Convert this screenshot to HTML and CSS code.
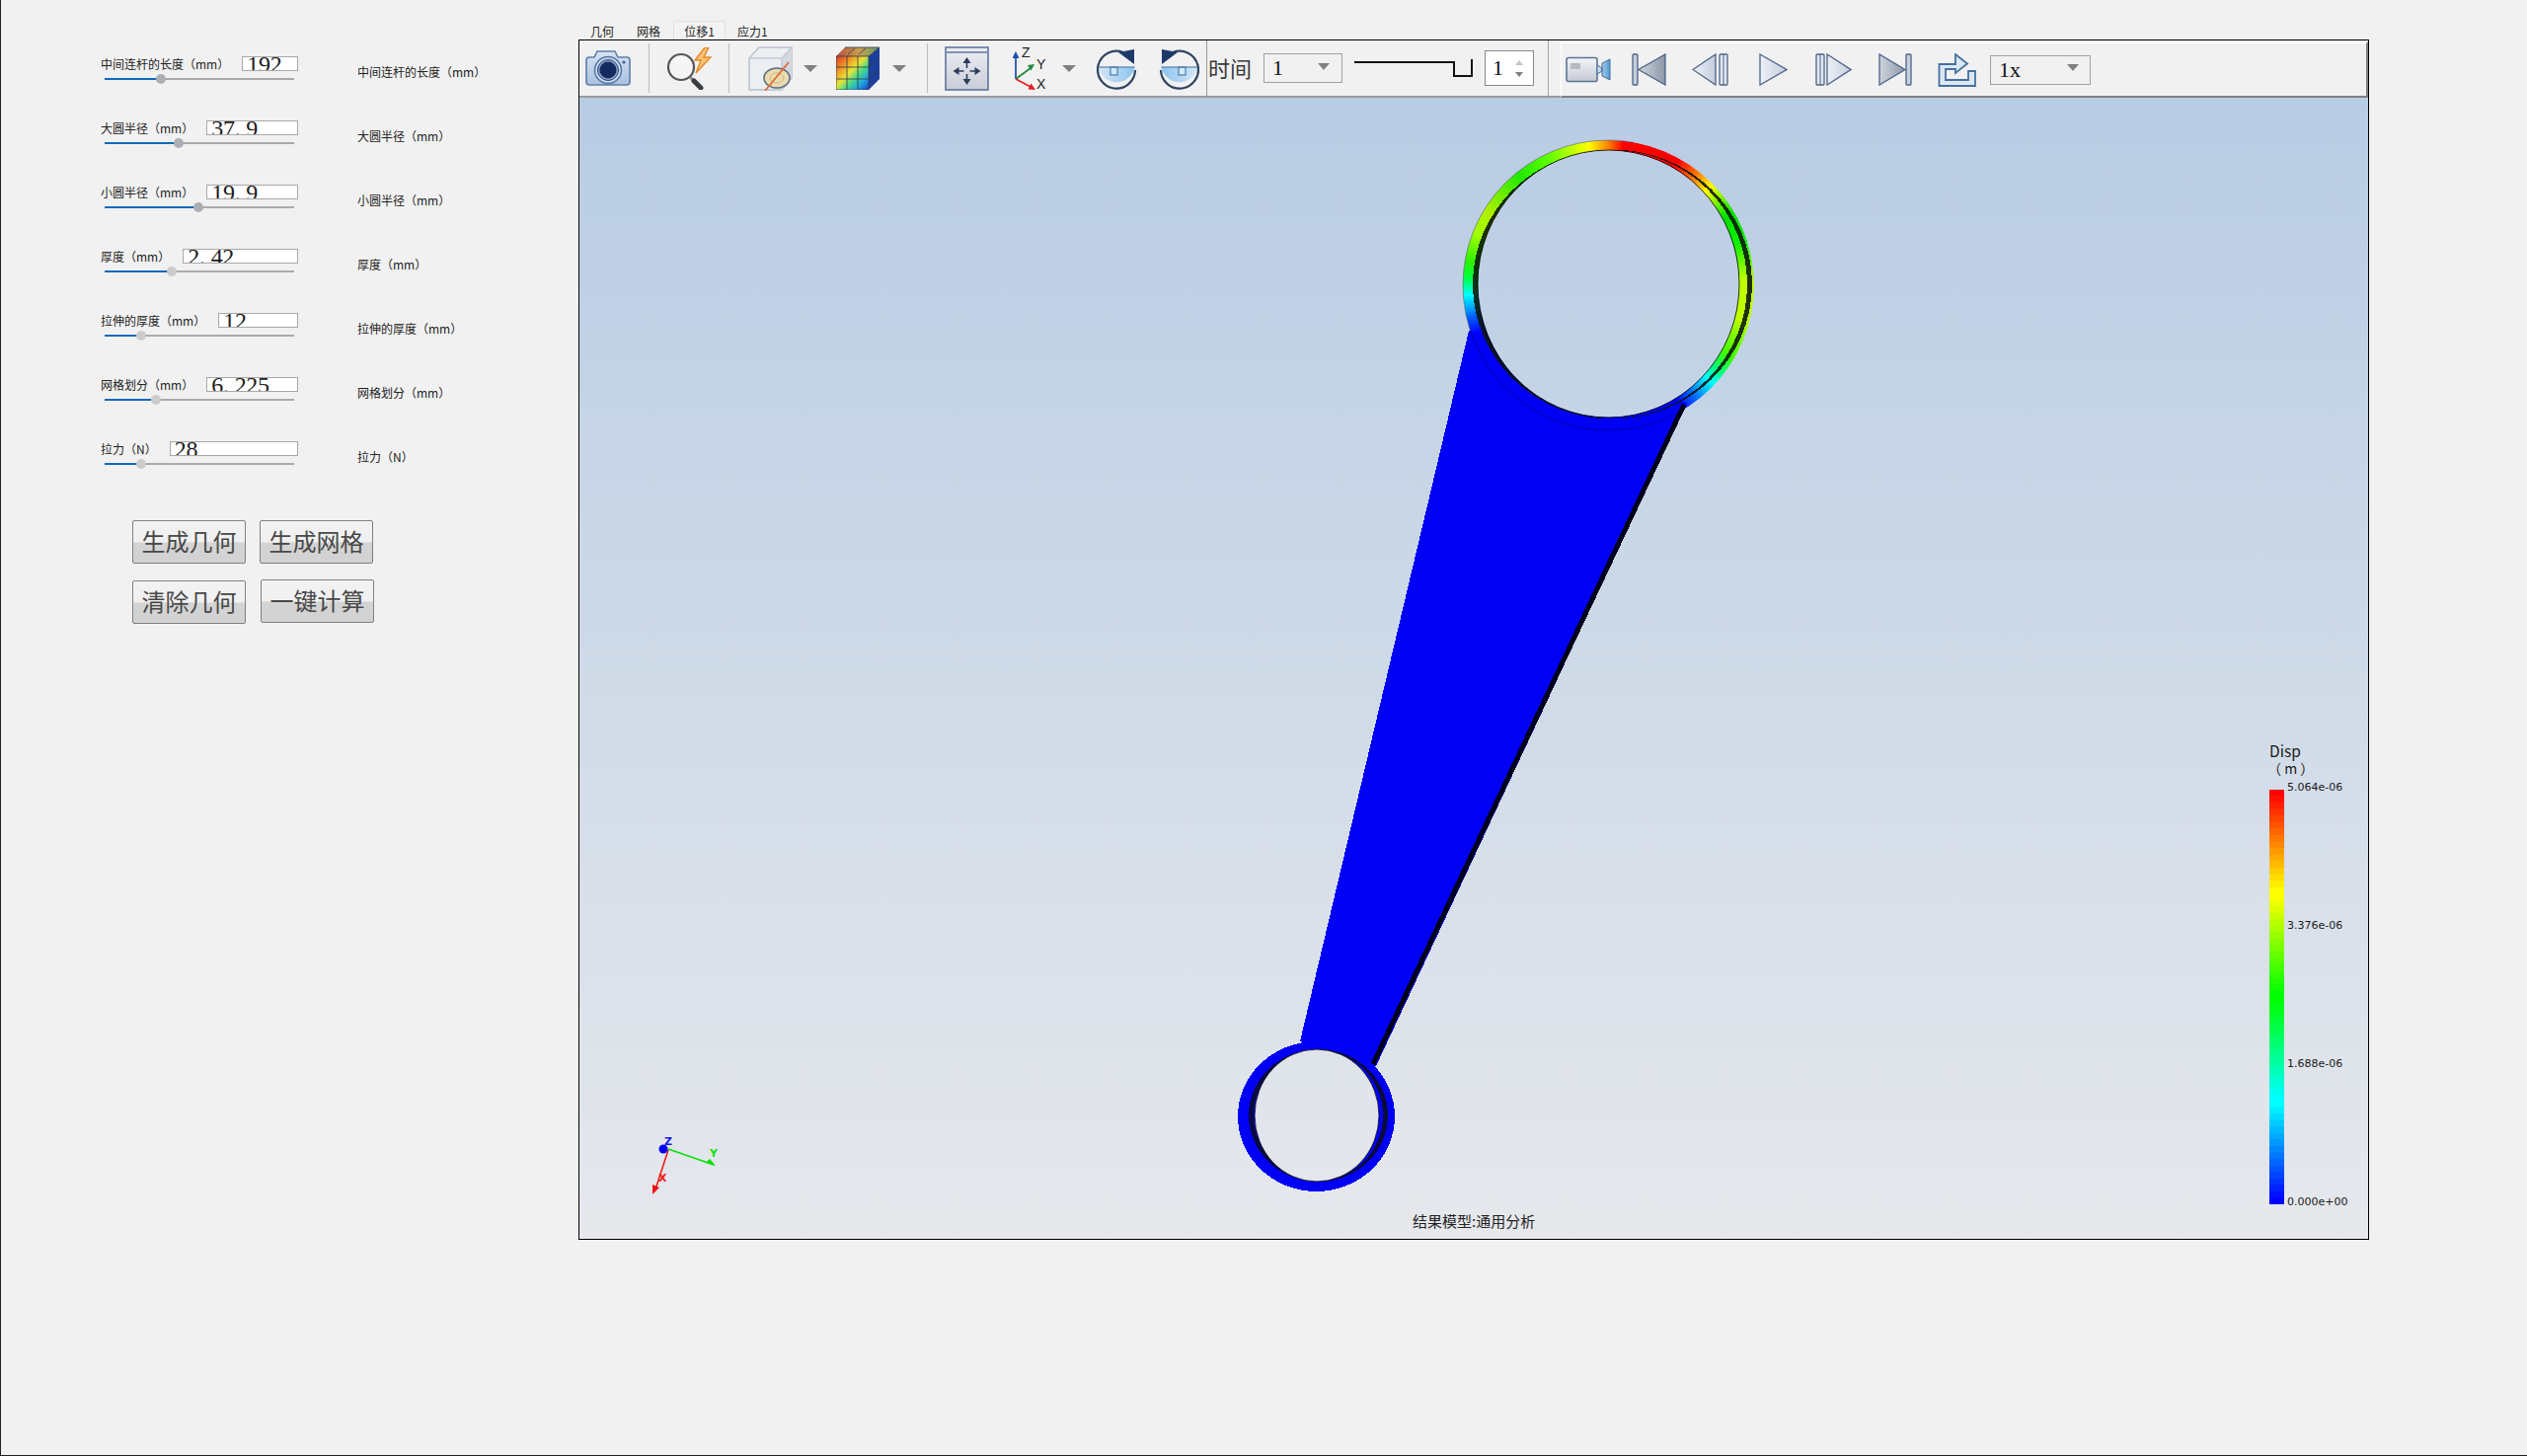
FILE: index.html
```html
<!DOCTYPE html>
<html lang="zh-CN">
<head>
    <meta charset="UTF-8">
    <title>连杆分析</title>
    <link rel="stylesheet" href="styles.css">
</head>
<body>
    <div class="panel">
        <div class="row">
            <div class="ctl">
                <div class="ctl-top"><span class="lbl">中间连杆的长度（mm）</span><div class="num"><span>192</span></div></div>
                <div class="track"><div class="fill" style="width:29.7%"></div></div>
            </div>
            <div class="side">中间连杆的长度（mm）</div>
        </div>
        <div class="row">
            <div class="ctl">
                <div class="ctl-top"><span class="lbl">大圆半径（mm）</span><div class="num"><span>37<b>.</b>9</span></div></div>
                <div class="track"><div class="fill" style="width:39.1%"></div></div>
            </div>
            <div class="side">大圆半径（mm）</div>
        </div>
        <div class="row">
            <div class="ctl">
                <div class="ctl-top"><span class="lbl">小圆半径（mm）</span><div class="num"><span>19<b>.</b>9</span></div></div>
                <div class="track"><div class="fill" style="width:49.5%"></div></div>
            </div>
            <div class="side">小圆半径（mm）</div>
        </div>
        <div class="row">
            <div class="ctl">
                <div class="ctl-top"><span class="lbl">厚度（mm）</span><div class="num"><span>2<b>.</b>42</span></div></div>
                <div class="track light"><div class="fill" style="width:35.4%"></div></div>
            </div>
            <div class="side">厚度（mm）</div>
        </div>
        <div class="row">
            <div class="ctl">
                <div class="ctl-top"><span class="lbl">拉伸的厚度（mm）</span><div class="num"><span>12</span></div></div>
                <div class="track light"><div class="fill" style="width:19.3%"></div></div>
            </div>
            <div class="side">拉伸的厚度（mm）</div>
        </div>
        <div class="row">
            <div class="ctl">
                <div class="ctl-top"><span class="lbl">网格划分（mm）</span><div class="num"><span>6<b>.</b>225</span></div></div>
                <div class="track light"><div class="fill" style="width:27.1%"></div></div>
            </div>
            <div class="side">网格划分（mm）</div>
        </div>
        <div class="row">
            <div class="ctl">
                <div class="ctl-top"><span class="lbl">拉力（N）</span><div class="num"><span>28</span></div></div>
                <div class="track light"><div class="fill" style="width:19.3%"></div></div>
            </div>
            <div class="side">拉力（N）</div>
        </div>

        <div class="btn-row">
            <button class="btn">生成几何</button>
            <button class="btn">生成网格</button>
        </div>
        <div class="btn-row second">
            <button class="btn">清除几何</button>
            <button class="btn up">一键计算</button>
        </div>
    </div>

    <div class="viewer">
        <div class="tabs">
            <span class="tab">几何</span>
            <span class="tab">网格</span>
            <span class="tab active">位移1</span>
            <span class="tab">应力1</span>
        </div>
        <div class="frame">
            <div class="toolbar">
                <!-- camera -->
                <svg class="ico i-cam" width="46" height="38" viewBox="0 0 46 38">
                    <defs>
                        <linearGradient id="camBody" x1="0" y1="0" x2="0" y2="1"><stop offset="0" stop-color="#d8e4f4"/><stop offset="1" stop-color="#a9c0e0"/></linearGradient>
                    </defs>
                    <path d="M1 11q0-3 3-3h5l3-6h18l3 6h9q3 0 3 3v22q0 3-3 3H4q-3 0-3-3z" fill="url(#camBody)" stroke="#5d7da8" stroke-width="1.6"/>
                    <circle cx="23" cy="21" r="13.5" fill="#c9d9ef" stroke="#56759f" stroke-width="1.5"/>
                    <circle cx="23" cy="21" r="10.5" fill="#8aa2c8" stroke="#2b4575"/>
                    <circle cx="23" cy="21" r="8.5" fill="#152a5e"/>
                    <circle cx="39" cy="13" r="1.6" fill="#3d5f90"/>
                </svg>
                <span class="sep s1"></span>
                <!-- search + bolt -->
                <svg class="ico i-mag" width="47" height="43" viewBox="0 0 47 43">
                    <path d="M39 0L29 13h6l-5 13 15-16h-7l5-10z" fill="#f8c070" stroke="#e58a2c" stroke-width="1.4"/>
                    <circle cx="15" cy="20" r="13" fill="#f6f7f8" fill-opacity=".7" stroke="#555" stroke-width="2.200"/>
                    <path d="M24 30l4 4" stroke="#888" stroke-width="3"/>
                    <path d="M28 34l7 7" stroke="#3a3d42" stroke-width="5" stroke-linecap="round"/>
                </svg>
                <span class="sep s2"></span>
                <!-- clipped box -->
                <svg class="ico i-box" width="45" height="45" viewBox="0 0 45 45">
                    <path d="M1 12L11 1h33v31L34 44H1z" fill="#eceef2" stroke="#b9c1cd" stroke-width="1.5"/>
                    <path d="M34 12L44 1v31L34 44z" fill="#d3d8e0"/>
                    <path d="M1 12h33v32M34 12L44 1" fill="none" stroke="#c3cad5" stroke-width="1.5"/>
                    <ellipse cx="29" cy="32" rx="13" ry="10" fill="#eadcae" stroke="#5f6f88" stroke-width="1.6"/>
                    <ellipse cx="29" cy="32" rx="7" ry="5" fill="none" stroke="#c9b880"/>
                    <path d="M17 45L41 16" stroke="#df6a3a" stroke-width="1.8"/>
                </svg>
                <i class="tri t1"></i>
                <!-- colored cube -->
                <svg class="ico i-cube" width="44" height="44" viewBox="0 0 44 44">
                    <defs>
                        <linearGradient id="cubeFront" x1="0" y1="0" x2="1" y2="1">
                            <stop offset="0" stop-color="#dc3424"/>
                            <stop offset=".28" stop-color="#f0a028"/>
                            <stop offset=".45" stop-color="#e8e436"/>
                            <stop offset=".62" stop-color="#48d884"/>
                            <stop offset=".8" stop-color="#20a4e4"/>
                            <stop offset="1" stop-color="#1a3cc0"/>
                        </linearGradient>
                        <linearGradient id="cubeTop" x1="0" y1="0" x2="1" y2="0">
                            <stop offset="0" stop-color="#b85040"/>
                            <stop offset=".55" stop-color="#c8a050"/>
                            <stop offset="1" stop-color="#5c9868"/>
                        </linearGradient>
                    </defs>
                    <path d="M0 10L9 1h35L33 10z" fill="url(#cubeTop)"/>
                    <path d="M33 10L44 1v32L33 44z" fill="#1b3f9c"/>
                    <rect x="0" y="10" width="33" height="34" fill="url(#cubeFront)"/>
                    <path d="M0 10h33v34H0zM11 10v34M22 10v34M0 21h33M0 33h33M33 10L44 1M33 21l11-9M33 33l11-9M12 8l7-6M23 8l7-6M9 1h35" fill="none" stroke="#30384a" stroke-width=".8"/>
                </svg>
                <i class="tri t2"></i>
                <span class="sep s3"></span>
                <!-- fit view -->
                <svg class="ico i-fit" width="45" height="45" viewBox="0 0 45 45">
                    <defs>
                        <linearGradient id="fitBg" x1="0" y1="0" x2="0" y2="1"><stop offset="0" stop-color="#eceef3"/><stop offset="1" stop-color="#c9cdd8"/></linearGradient>
                    </defs>
                    <rect x="1" y="1" width="43" height="43" fill="url(#fitBg)" stroke="#5f769c" stroke-width="1.600"/>
                    <path d="M1 6h43" stroke="#7f93b4" stroke-width="2"/>
                    <path d="M22.500 16v6M22.500 28v6M13.500 25h6M25.500 25h6" stroke="#2b3c5c" stroke-width="1.600"/>
                    <path d="M22.500 11l-4 6h8zM22.500 39l-4-6h8zM8.500 25l6-4v8zM36.500 25l-6-4v8z" fill="#2b3c5c"/>
                </svg>
                <!-- axes -->
                <svg class="ico i-axes" width="36" height="45" viewBox="0 0 36 45">
                    <path d="M3 33V10" stroke="#2358b0" stroke-width="1.8"/><path d="M3 5l-3.500 7h7z" fill="#1f4fa8"/>
                    <path d="M3 33l15-11" stroke="#1e8a3c" stroke-width="1.8"/><path d="M22 18l-7 1 3.500 5.500z" fill="#1e8a3c"/>
                    <path d="M3 33l15 8" stroke="#e02020" stroke-width="1.8"/><path d="M23 44l-7.500-.5 3-6z" fill="#e02020"/>
                    <text class="ax" x="9" y="11">Z</text><text class="ax" x="24" y="23">Y</text><text class="ax" x="24" y="43">X</text>
                </svg>
                <i class="tri t3"></i>
                <!-- rotate -->
                <svg class="ico i-rot1" width="41" height="43" viewBox="0 0 41 43">
                    <defs>
                        <linearGradient id="rotFill" x1="0" y1="0" x2="1" y2="0"><stop offset="0" stop-color="#d4e7f7"/><stop offset="1" stop-color="#8cc4ec"/></linearGradient>
                    </defs>
                    <path d="M1.500 20h37a19 20 0 0 1-37 0z" fill="url(#rotFill)"/>
                    <rect x="14" y="20" width="7" height="8" fill="#cfe8f8" stroke="#3c6c9c"/>
                    <path d="M27 5A19 19 0 1 0 39 23" fill="none" stroke="#2e4462" stroke-width="2.200"/>
                    <path d="M1.500 20h37" stroke="#3a6a9a" stroke-width="1.200"/>
                    <path d="M38 17L38 2L22 5z" fill="#1d3a66"/>
                </svg>
                <svg class="ico i-rot2" width="41" height="43" viewBox="0 0 41 43">
                    <g transform="translate(41 0) scale(-1 1)">
                        <path d="M1.500 20h37a19 20 0 0 1-37 0z" fill="url(#rotFill)"/>
                        <rect x="14" y="20" width="7" height="8" fill="#cfe8f8" stroke="#3c6c9c"/>
                        <path d="M27 5A19 19 0 1 0 39 23" fill="none" stroke="#2e4462" stroke-width="2.200"/>
                        <path d="M1.500 20h37" stroke="#3a6a9a" stroke-width="1.200"/>
                        <path d="M38 17L38 2L22 5z" fill="#1d3a66"/>
                    </g>
                </svg>
                <span class="sep s4"></span>
                <span class="time-lbl">时间</span>
                <div class="combo c-time"><span>1</span><i class="tri"></i></div>
                <div class="tslider"><div class="tline"></div><div class="tknob"></div></div>
                <div class="spin"><span>1</span><div class="spin-arrows"><i class="up-a"></i><i class="down-a"></i></div></div>
                <span class="sep s5"></span>

                <div class="transport">
                    <svg class="ico i-video" width="46" height="27" viewBox="0 0 46 27">
                        <defs>
                            <linearGradient id="camG" x1="0" y1="0" x2="0" y2="1"><stop offset="0" stop-color="#f4f5f8"/><stop offset="1" stop-color="#c4c9d4"/></linearGradient>
                            <linearGradient id="btnG" x1="0" y1="0" x2="1" y2="0"><stop offset="0" stop-color="#eef1f7"/><stop offset="1" stop-color="#c3cddb"/></linearGradient>
                            <linearGradient id="btnD" x1="0" y1="0" x2="1" y2="0"><stop offset="0" stop-color="#cfd4db"/><stop offset="1" stop-color="#8c98a8"/></linearGradient>
                            <linearGradient id="lensG" x1="0" y1="0" x2="1" y2="0"><stop offset="0" stop-color="#d8e8f4"/><stop offset="1" stop-color="#4c9ad4"/></linearGradient>
                        </defs>
                        <rect x="1" y="1.500" width="31" height="24" rx="2" fill="url(#camG)" stroke="#5d7496" stroke-width="1.6"/>
                        <rect x="5" y="7" width="10" height="6" fill="#b6bac2"/>
                        <path d="M32 9l5 3v3l-5 3zM37 7l8-4v21l-8-4z" fill="url(#lensG)" stroke="#4d6a90"/>
                    </svg>
                    <svg class="ico i-first" width="35" height="33" viewBox="0 0 35 33">
                        <rect x="1" y="1" width="5" height="31" rx="1" fill="#c7cfdb" stroke="#4c6488" stroke-width="1.3"/>
                        <path d="M34 1v31L7 16.500z" fill="url(#btnD)" stroke="#4c6488" stroke-width="1.3"/>
                    </svg>
                    <svg class="ico i-prev" width="38" height="33" viewBox="0 0 38 33">
                        <path d="M1 16.500L24 1v31z" fill="url(#btnG)" stroke="#4c6488" stroke-width="1.3"/>
                        <rect x="28" y="1" width="8" height="31" rx="1" fill="#e4e8f0" stroke="#4c6488" stroke-width="1.3"/>
                        <path d="M32 1v31" stroke="#4c6488"/>
                    </svg>
                    <svg class="ico i-play" width="29" height="33" viewBox="0 0 29 33">
                        <path d="M1 1l27 15.500L1 32z" fill="url(#btnG)" stroke="#4c6488" stroke-width="1.3"/>
                    </svg>
                    <svg class="ico i-next" width="37" height="33" viewBox="0 0 37 33">
                        <rect x="1" y="1" width="8" height="31" rx="1" fill="#e4e8f0" stroke="#4c6488" stroke-width="1.3"/>
                        <path d="M5 1v31" stroke="#4c6488"/>
                        <path d="M12 1l24 15.500L12 32z" fill="url(#btnG)" stroke="#4c6488" stroke-width="1.3"/>
                    </svg>
                    <svg class="ico i-last" width="34" height="33" viewBox="0 0 34 33">
                        <path d="M1 1v31l26-15.500z" fill="url(#btnD)" stroke="#4c6488" stroke-width="1.3"/>
                        <rect x="28" y="1" width="5" height="31" rx="1" fill="#c7cfdb" stroke="#4c6488" stroke-width="1.3"/>
                    </svg>
                    <svg class="ico i-export" width="39" height="34" viewBox="0 0 39 34">
                        <path d="M1.500 33V11H18V1L30 10.500 18 20v-4H8v11h23v-9h7v15z" fill="#dce7f4" stroke="#44719f" stroke-width="1.8"/>
                    </svg>
                    <div class="combo c-speed"><span>1x</span><i class="tri"></i></div>
                </div>
            </div>

            <div class="view3d">
                <svg class="model" width="1811" height="1156" viewBox="587 99 1811 1156">
                    <defs>
                        <clipPath id="holes">
                            <path clip-rule="evenodd" d="M587 99H2398V1255H587Z M1497 287.500a132.500 135.500 0 1 0 265 0a132.500 135.500 0 1 0 -265 0Z M1271 1130a63 67 0 1 0 126 0a63 67 0 1 0 -126 0Z"/>
                        </clipPath>
                        <filter id="bands" color-interpolation-filters="sRGB">
                            <feComponentTransfer>
                                <feFuncR type="discrete" tableValues="0 .067 .133 .2 .267 .333 .4 .467 .533 .6 .667 .733 .8 .867 .933 1"/>
                                <feFuncG type="discrete" tableValues="0 .067 .133 .2 .267 .333 .4 .467 .533 .6 .667 .733 .8 .867 .933 1"/>
                                <feFuncB type="discrete" tableValues="0 .067 .133 .2 .267 .333 .4 .467 .533 .6 .667 .733 .8 .867 .933 1"/>
                            </feComponentTransfer>
                        </filter>
                    </defs>
                    <foreignObject x="1482" y="142" width="295" height="294">
                        <div xmlns="http://www.w3.org/1999/xhtml" class="ring"></div>
                    </foreignObject>
                    <g clip-path="url(#holes)" shape-rendering="crispEdges">
                        <path d="M1488 335L1317 1055L1394 1080L1709 408Z" fill="#0000f5"/>
                        <ellipse cx="1333.500" cy="1131" rx="79.500" ry="76" fill="#0000f5"/>
                        <path fill-rule="evenodd" d="M1492 288a141.500 136.500 0 1 0 283 0a141.500 136.500 0 1 0 -283 0Z M1497 288a136.500 136 0 1 0 273 0a136.500 136 0 1 0 -273 0Z" fill="#0a1408" fill-opacity=".88"/>
                        <path fill-rule="evenodd" d="M1265 1130a70.500 67 0 1 0 141 0a70.500 67 0 1 0 -141 0Z M1270 1130a65.500 66 0 1 0 131 0a65.500 66 0 1 0 -131 0Z" fill="#0a0a40"/>
                        <path d="M1706 410L1391 1078" stroke="#00001c" stroke-width="5"/>
                    </g>
                    <ellipse cx="1629.500" cy="287.500" rx="132.500" ry="135.500" fill="none" stroke="#000" stroke-width=".8"/>
                    <ellipse cx="1334" cy="1130" rx="63" ry="67" fill="none" stroke="#000" stroke-width=".8"/>
                    <ellipse cx="1629.500" cy="289" rx="147.500" ry="147" fill="none" stroke="#000" stroke-opacity=".4" stroke-width=".8" stroke-dasharray="560 300" stroke-dashoffset="700"/>
                    <!-- triad -->
                    <path d="M677 1164L723 1180" stroke="#00e000" stroke-width="1.500"/>
                    <path d="M725 1181L715 1178L719 1174Z" fill="#00e000"/>
                    <path d="M677 1165L664 1205" stroke="#f01010" stroke-width="1.500"/>
                    <path d="M661 1210L661 1200L668 1203Z" fill="#f01010"/>
                    <circle cx="672" cy="1164" r="4.500" fill="#0000f0"/>
                    <text class="tr z" x="673" y="1160">Z</text>
                    <text class="tr y" x="719" y="1172">Y</text>
                    <text class="tr x" x="667" y="1197">X</text>
                </svg>

                <div class="legend">
                    <div class="legend-title">Disp<br><span>（ m ）</span></div>
                    <div class="legend-body">
                        <div class="bar"></div>
                        <div class="ticks">
                            <span>5.064e-06</span>
                            <span>3.376e-06</span>
                            <span>1.688e-06</span>
                            <span>0.000e+00</span>
                        </div>
                    </div>
                </div>
                <div class="status">结果模型:通用分析</div>
            </div>
        </div>
    </div>
</body>
</html>
```

FILE: styles.css
```css
html, body {
    margin: 0;
    height: 100%;
}
body {
    width: 2560px;
    height: 1475px;
    box-sizing: border-box;
    display: flex;
    background-color: #f1f1f1;
    border-left: 1px solid #222;
    border-bottom: 1px solid #222;
    font-family: "Noto Sans CJK SC", "Liberation Sans", sans-serif;
    color: #222;
    overflow: hidden;
}

/* left panel */
.panel {
    width: 585px;
    flex: none;
    box-sizing: border-box;
    padding: 57px 0 0 101px;
    font-size: 12px;
}
.row {
    display: flex;
    height: 65px;
}
.ctl {
    width: 200px;
}
.ctl-top {
    display: flex;
    align-items: center;
    height: 15px;
    gap: 13px;
}
.lbl {
    white-space: nowrap;
    line-height: 15px;
}
/* the value box is too short for its font, the digits get cut at the bottom */
.num {
    flex: 1;
    height: 15px;
    box-sizing: border-box;
    background: #fff;
    border: 1px solid #a8a8a8;
    overflow: hidden;
    padding-left: 4px;
    font-family: "Liberation Serif", serif;
    font-size: 24px;
    line-height: 24px;
    letter-spacing: -.3px;
    color: #1c1c1c;
}
.num span {
    display: block;
    margin-top: -5px;
}
.num b {
    display: inline-block;
    width: 11.700px;
    font-weight: normal;
}
.track {
    height: 2px;
    margin: 7px 4px 0 4px;
    background: #aaa;
}
.fill {
    position: relative;
    height: 100%;
    background: #0f69bd;
}
.fill::after {
    content: "";
    position: absolute;
    right: -5px;
    top: -4px;
    width: 10px;
    height: 10px;
    border-radius: 50%;
    background: #abafb3;
}
.track.light .fill::after {
    background: #cccccc;
}
.side {
    margin: 8px 0 0 60px;
    line-height: 16px;
    white-space: nowrap;
}

.btn-row {
    display: flex;
    gap: 14px;
    margin: 15px 0 0 32px;
    align-items: flex-start;
}
.btn-row.second {
    margin-top: 17px;
    gap: 15px;
}
.btn {
    width: 115px;
    height: 44px;
    padding: 0 0 3px;
    border: 1px solid #808080;
    border-radius: 2px;
    background: linear-gradient(#f2f2f2 0, #f0f0f0 50%, #d4d4d4 52%, #d2d2d2 100%);
    font-family: "Liberation Serif", "Noto Sans CJK SC", serif;
    font-size: 24px;
    color: #484848;
}
.btn.up {
    margin-top: -1px;
}

/* viewer */
.viewer {
    width: 1814px;
    flex: none;
    padding-top: 21px;
}
.tabs {
    display: flex;
    height: 19px;
    font-size: 12px;
    line-height: 22px;
    padding-left: 12px;
}
.tab {
    margin-right: 23px;
    white-space: nowrap;
}
.tab.active {
    width: 53px;
    margin: 0 12px 0 -10px;
    box-sizing: border-box;
    text-align: center;
    background: #f3f3f3;
    border: 1px solid #e0e0e0;
    border-bottom: 0;
    line-height: 20px;
}
.frame {
    height: 1216px;
    box-sizing: border-box;
    border: 1px solid #000;
}
.toolbar {
    display: flex;
    align-items: center;
    height: 58px;
    box-sizing: border-box;
    border-bottom: 2px solid #9a9a9a;
    font-family: "Liberation Serif", "Noto Sans CJK SC", serif;
}
.ico {
    display: block;
    flex: none;
}
.sep {
    width: 1px;
    height: 50px;
    flex: none;
    background: #bdbdbd;
}
.i-cam { margin-left: 6px; }
.s1 { margin-left: 18px; }
.i-mag { margin-left: 17px; }
.s2 { margin-left: 16px; }
.i-box { margin-left: 19px; }
.t1 { margin-left: 11px; }
.i-cube { margin-left: 19px; }
.t2 { margin-left: 13px; }
.s3 { margin-left: 21px; }
.i-fit { margin-left: 17px; }
.i-axes { margin-left: 24px; }
.t3 { margin-left: 14px; }
.i-rot1 { margin-left: 21px; }
.i-rot2 { margin-left: 22px; }
.s4 { margin-left: 7px; height: 56px; background: #9a9a9a; }
.time-lbl {
    margin: 3px 0 0 1px;
    width: 45px;
    font-size: 22px;
    line-height: 30px;
    color: #3a3a3a;
    white-space: nowrap;
}
.tri {
    display: block;
    flex: none;
    width: 0;
    height: 0;
    border-left: 7px solid transparent;
    border-right: 7px solid transparent;
    border-top: 7px solid #808080;
}
.combo {
    display: flex;
    align-items: center;
    justify-content: space-between;
    height: 30px;
    box-sizing: border-box;
    border: 1px solid #a0a0a0;
    font-size: 22px;
    color: #111;
}
.combo .tri {
    border-left-width: 6px;
    border-right-width: 6px;
    border-top-width: 7px;
    margin-bottom: 4px;
}
.c-time {
    width: 80px;
    margin-left: 11px;
    padding: 0 12px 0 8px;
}
.c-speed {
    width: 102px;
    margin-left: 14px;
    padding: 0 11px 0 8px;
}
.tslider {
    display: flex;
    align-items: flex-start;
    width: 120px;
    height: 18px;
    margin-left: 12px;
}
.tline {
    flex: 1;
    height: 2px;
    margin-top: 2px;
    background: #111;
}
/* knob is open at the top, its right side stands a little higher than the left */
.tknob {
    width: 20px;
    height: 18px;
    box-sizing: border-box;
    border-right: 2px solid #111;
    border-bottom: 2px solid #111;
    background: linear-gradient(#111, #111) left 2px / 2px 100% no-repeat;
}
.spin {
    display: flex;
    align-items: center;
    justify-content: space-between;
    width: 50px;
    height: 36px;
    margin-left: 12px;
    padding: 0 10px 0 7px;
    box-sizing: border-box;
    background: #fff;
    border: 1px solid #888;
    font-size: 22px;
    color: #111;
}
.spin-arrows {
    display: flex;
    flex-direction: column;
    gap: 7px;
}
.spin-arrows i {
    display: block;
    width: 0;
    height: 0;
    border-left: 4.500px solid transparent;
    border-right: 4.500px solid transparent;
}
.up-a { border-bottom: 5px solid #c4c4c4; }
.down-a { border-top: 5px solid #808080; }
.s5 { margin-left: 14px; height: 56px; background: #a4a4a4; }
.transport {
    display: flex;
    align-items: center;
    flex: 1;
    align-self: stretch;
    box-sizing: border-box;
    margin: 1px 0 -2px 12px;
    padding-left: 4px;
    background: #f1f1f1;
    border-top: 2px solid #fff;
    border-left: 1px solid #fff;
    border-right: 2px solid #808080;
    border-bottom: 2px solid #808080;
}
.i-video { margin-left: 0; }
.i-first { margin-left: 21px; }
.i-prev { margin-left: 26px; }
.i-play { margin-left: 30px; }
.i-next { margin-left: 28px; }
.i-last { margin-left: 27px; }
.i-export { margin-left: 26px; }
.ax {
    font-family: "Liberation Sans", sans-serif;
    font-size: 14px;
    fill: #222;
}

/* 3d view */
.view3d {
    position: relative;
    height: 1156px;
    background: linear-gradient(#b8cce4, #e6e8ec);
    overflow: hidden;
}
.model {
    position: absolute;
    left: 0;
    top: 0;
}
.ring {
    width: 295px;
    height: 294px;
    border-radius: 50%;
    background: conic-gradient(#ff8000 0deg, #ff0000 6deg, #ff0000 29deg, #ff8000 39deg, #ffff00 46deg, #60f000 54deg, #00e000 60deg, #10f000 72deg, #c0ff00 88deg, #c0ff00 104deg, #40ff00 120deg, #00ff80 128deg, #00ffff 133deg, #0060ff 143deg, #0000ff 150deg, #0000ff 250deg, #0060ff 257deg, #00ffff 266deg, #00ff40 273deg, #30f000 280deg, #a0ff00 291deg, #b0f000 301deg, #20e800 321deg, #60ff00 335deg, #c0ff00 345deg, #ffff00 352deg, #ff8000 360deg);
    -webkit-mask: radial-gradient(ellipse 132.500px 135.500px at 147.500px 145.500px, transparent 99.500%, #000 100%);
    mask: radial-gradient(ellipse 132.500px 135.500px at 147.500px 145.500px, transparent 99.500%, #000 100%);
}
.tr {
    font-family: "DejaVu Sans", sans-serif;
    font-size: 11px;
    font-weight: bold;
}
.tr.z { fill: #1818e8; }
.tr.y { fill: #10e010; }
.tr.x { fill: #f02020; }

.legend {
    position: absolute;
    left: 1712px;
    top: 653px;
    font-family: "DejaVu Sans", sans-serif;
    color: #1a1a1a;
}
.legend-title {
    height: 48px;
    font-family: "Noto Sans CJK SC", "Liberation Sans", sans-serif;
    font-size: 15.500px;
    line-height: 17px;
}
.legend-title span {
    margin-left: -2px;
    font-size: 14px;
}
.legend-body {
    display: flex;
}
.bar {
    width: 15px;
    height: 420px;
    background: linear-gradient(#ff0000, #ffff00, #00ff00, #00ffff, #0000ff);
    filter: url(#bands);
}
.ticks {
    display: flex;
    flex-direction: column;
    justify-content: space-between;
    height: 434px;
    margin: -9px 0 0 3px;
    font-size: 11px;
    line-height: 14px;
}
.status {
    position: absolute;
    left: 844px;
    top: 1128px;
    font-size: 15px;
    line-height: 20px;
    white-space: nowrap;
}
```
